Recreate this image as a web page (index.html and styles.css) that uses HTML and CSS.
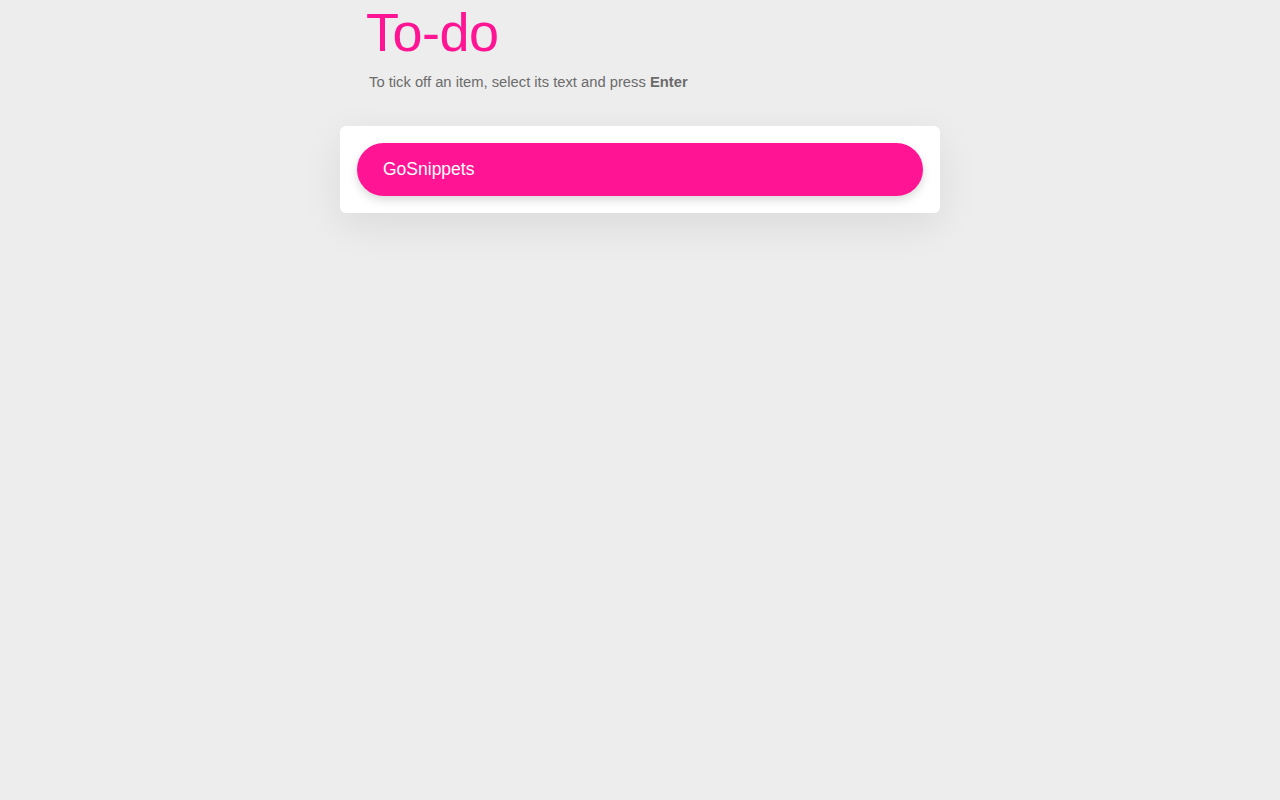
FILE: index.html
```html
<!DOCTYPE html>
<html>
<head>
<meta charset="utf-8">
<link rel="stylesheet" href="styles.css">
</head>
<body>
<div class="app">
  <header class="header">
    <h1 class="title">To-do</h1>
    <p class="hint">To tick off an item, select its text and press <strong>Enter</strong></p>
  </header>
  <div class="card">
    <div class="item">GoSnippets</div>
  </div>
</div>
</body>
</html>
```
FILE: styles.css
```css
html, body {
  margin: 0;
  padding: 0;
  background: #ededed;
  font-family: "Liberation Sans", Arial, sans-serif;
}
body {
  min-height: 100vh;
}
.app {
  width: 600px;
  margin: 0 auto;
  padding-bottom: 80px;
}
.header {
  padding: 0 0 0 26px;
}
.title {
  margin: 0;
  padding-top: 2px;
  font-size: 54px;
  letter-spacing: -0.5px;
  font-weight: normal;
  color: #ff1493;
  line-height: 60px;
}
.hint {
  margin: 10px 0 0 3px;
  font-size: 14.75px;
  line-height: 20px;
  color: #6b6b6b;
}
.hint strong {
  font-weight: bold;
}
.card {
  margin-top: 34px;
  background: #fff;
  border-radius: 6px;
  padding: 17px;
  box-shadow: 0 12px 40px rgba(0, 0, 0, 0.08);
}
.item {
  height: 53px;
  border-radius: 27px;
  background: #ff1493;
  color: #fff;
  font-size: 17.5px;
  display: flex;
  align-items: center;
  padding: 0 26px;
  box-shadow: 0 4px 10px rgba(0, 0, 0, 0.15);
}
```
